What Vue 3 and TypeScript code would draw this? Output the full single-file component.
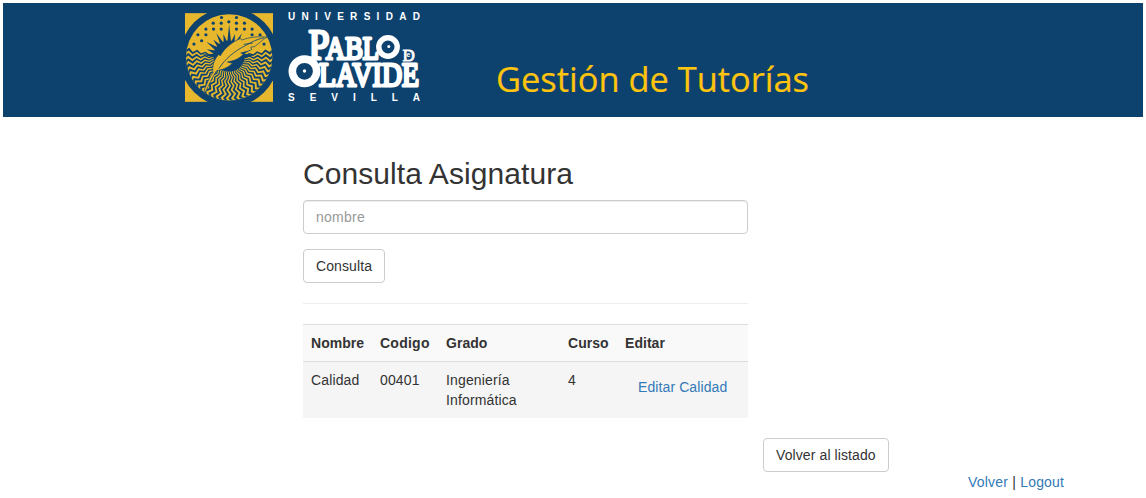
<script setup lang="ts">
interface Subject {
  name: string
  code: string
  degree: string
  year: number
}

const subjects: Subject[] = [
  { name: 'Calidad', code: '00401', degree: 'Ingeniería Informática', year: 4 },
]

const cx = 163
const cy = 172

function polar(r: number, deg: number): string {
  const a = (deg * Math.PI) / 180
  return `${(cx + r * Math.cos(a)).toFixed(1)} ${(cy + r * Math.sin(a)).toFixed(1)}`
}

// Rippled rays of the lower half of the emblem
const waves = Array.from({ length: 28 }, (_, i) => {
  const base = -8 + i * 7.3
  const inner: string[] = []
  const outer: string[] = []
  for (let k = 0; k <= 8; k++) {
    const r = 36 + k * 12.5
    const swing = k % 2 ? 2.5 : -2.5
    inner.push(polar(r, base + swing - 1.85))
    outer.unshift(polar(r, base + swing + 1.85))
  }
  return `M${inner.concat(outer).join('L')}Z`
})

// Sunburst above the centre
const burst = (() => {
  const points: string[] = []
  const count = 13
  for (let i = 0; i < count; i++) {
    const angle = -174 + i * 14
    points.push(polar(46, angle - 7))
    points.push(polar(i === 6 ? 100 : i % 2 ? 72 : 82, angle))
  }
  points.push(polar(46, 3))
  return `M${points.join('L')}Z`
})()

const dots = [
  [140, 52], [185, 52],
  [115, 69], [162, 65], [209, 69], [139, 69], [185, 69],
  [93, 87], [116, 87], [139, 87], [185, 87], [209, 87], [232, 87],
  [69, 104], [93, 104], [232, 104], [256, 104],
  [57, 132], [80, 122], [268, 132],
]
</script>

<template>
  <div class="page">
    <header class="banner">
      <svg class="emblem" viewBox="30 39 265 267" aria-hidden="true">
        <defs>
          <clipPath id="disc"><circle cx="163" cy="172" r="130" /></clipPath>
        </defs>
        <rect x="30" y="39" width="265" height="267" fill="#e7b82e" />
        <circle cx="163" cy="172" r="149" fill="#0d426f" />
        <g clip-path="url(#disc)">
          <rect x="30" y="39" width="270" height="270" fill="#e7b82e" />
          <path v-for="(d, i) in waves" :key="i" :d="d" fill="#0d426f" />
          <circle v-for="(p, i) in dots" :key="`d${i}`" :cx="p[0]" :cy="p[1]" r="4.8" fill="#0d426f" />
          <path :d="burst" fill="#0d426f" />
          <circle cx="163" cy="168" r="47" fill="#0d426f" />
        </g>
        <path
          d="M86 277C94 254 102 236 114 218C111 196 118 177 133 162L136 168C148 145 170 127 197 115L201 120C224 111 249 108 277 111C262 119 254 130 239 140L228 141L231 148C218 156 210 155 198 159L206 163C190 179 174 183 158 186L173 190C157 205 141 210 125 212C112 233 101 256 93 275Z"
          fill="#e7b82e" stroke="#0d426f" stroke-width="2"
        />
        <path
          d="M132 206C152 176 176 155 213 136C231 125 249 117 268 113M207 133L234 129"
          fill="none" stroke="#0d426f" stroke-width="2.5"
        />
      </svg>
      <svg class="wordmark" viewBox="0 0 150 114" aria-label="Universidad Pablo de Olavide Sevilla">
        <g fill="#fff" font-family="'Liberation Sans', Arial, sans-serif" font-weight="700" font-size="10">
          <text x="8" y="17" textLength="132">UNIVERSIDAD</text>
          <text x="8" y="98" textLength="132">SEVILLA</text>
        </g>
        <g class="serif">
          <text x="28.5" y="55.5" font-size="43" textLength="21" lengthAdjust="spacingAndGlyphs">P</text>
          <text x="46" y="55.5" font-size="32" textLength="53" lengthAdjust="spacingAndGlyphs">ABL</text>
          <text x="39" y="82.5" font-size="34" textLength="100" lengthAdjust="spacingAndGlyphs">LAVIDE</text>
          <text class="small" x="122.5" y="57.5" font-size="17">D</text>
        </g>
        <g fill="#0d426f" stroke="#fff">
          <circle cx="108" cy="44" r="9.2" stroke-width="5.4" />
          <circle cx="24.5" cy="68.3" r="12.2" stroke-width="7.6" />
        </g>
        <circle cx="108.8" cy="43.5" r="1.5" fill="#fff" />
        <circle cx="24.5" cy="68" r="1.7" fill="#fff" />
        <text class="tiny" x="126.6" y="54.2">e</text>
      </svg>
      <svg class="title" viewBox="0 0 330 60">
        <text x="6" y="38.5" textLength="313" lengthAdjust="spacingAndGlyphs">Gestión de Tutorías</text>
      </svg>
    </header>

    <main class="content">
      <h2>Consulta Asignatura</h2>
      <form @submit.prevent>
        <input type="text" placeholder="nombre">
        <button class="btn search" type="submit">Consulta</button>
      </form>
      <hr>
      <table>
        <colgroup>
          <col class="c-name"><col class="c-code"><col class="c-degree"><col class="c-year"><col>
        </colgroup>
        <thead>
          <tr><th>Nombre</th><th class="wide">Codigo</th><th>Grado</th><th>Curso</th><th>Editar</th></tr>
        </thead>
        <tbody>
          <tr v-for="s in subjects" :key="s.code">
            <td>{{ s.name }}</td>
            <td>{{ s.code }}</td>
            <td>{{ s.degree }}</td>
            <td>{{ s.year }}</td>
            <td><a class="edit" href="#">Editar {{ s.name }}</a></td>
          </tr>
        </tbody>
      </table>
    </main>

    <div class="back"><button class="btn list" type="button">Volver al listado</button></div>
    <footer><a href="#">Volver</a> | <a href="#">Logout</a></footer>
  </div>
</template>

<style>
body { margin: 0; background: #fff; overflow: hidden; }
</style>

<style scoped>
.page {
  box-sizing: border-box;
  width: 1146px;
  height: 498px;
  padding: 3px;
  overflow: hidden;
  font: 14px/20px "Liberation Sans", Arial, sans-serif;
  color: #333;
}
.page * { box-sizing: border-box; }
.banner {
  display: flex;
  align-items: flex-start;
  height: 114px;
  padding-left: 182px;
  background: #0d426f;
}
.emblem { width: 88px; height: 89px; margin-top: 10px; }
.wordmark { width: 150px; height: 114px; margin-left: 7px; }
.serif {
  fill: #fff;
  stroke: #fff;
  stroke-width: 3px;
  stroke-linejoin: round;
  font-family: "Liberation Serif", serif;
}
.small { stroke-width: 0.8px; }
.tiny { fill: #fff; font: 700 7px "Liberation Sans", sans-serif; }
.title { width: 330px; height: 60px; margin: 50px 0 0 60px; }
.title text { fill: #ffc40d; stroke: #ffc40d; stroke-width: 0.2px; font: 34.5px "Open Sans", sans-serif; }
.content { width: 445px; margin: 40px 0 0 300px; }
h2 { margin: 0 0 10px; font-size: 30px; font-weight: 400; line-height: 33px; letter-spacing: 0.08px; }
input {
  display: block;
  width: 100%;
  height: 34px;
  margin-bottom: 15px;
  padding: 6px 12px;
  border: 1px solid #ccc;
  border-radius: 4px;
  box-shadow: inset 0 1px 1px rgba(0, 0, 0, 0.075);
  font: inherit;
  letter-spacing: 0.25px;
}
input::placeholder { color: #999; opacity: 1; }
.btn {
  display: block;
  height: 34px;
  padding: 0 0 0 12px;
  border: 1px solid #ccc;
  border-radius: 4px;
  background: #fff;
  color: #333;
  font: inherit;
  letter-spacing: 0.1px;
  text-align: left;
  white-space: nowrap;
}
.search { width: 82px; }
hr { height: 1px; margin: 20px 0; border: 0; background: #eee; }
table { width: 100%; table-layout: fixed; border-collapse: separate; border-spacing: 0; background: #f9f9f9; }
.c-name { width: 69px; }
.c-code { width: 66px; }
.c-degree { width: 122px; }
.c-year { width: 57px; }
th, td { padding: 8px; border-top: 1px solid #ddd; text-align: left; vertical-align: top; }
th { font-weight: 700; letter-spacing: 0.04px; }
th.wide { letter-spacing: 0.25px; }
td { letter-spacing: 0.14px; }
td .edit { letter-spacing: 0.1px; }
tbody tr { background: #f5f5f5; }
a { color: #337ab7; text-decoration: none; }
.edit { display: inline-block; padding: 7px 13px; white-space: nowrap; }
.back { display: flex; margin: 20px 0 0 760px; }
.list { width: 126px; }
footer { margin-left: 965px; letter-spacing: 0.2px; }
</style>
